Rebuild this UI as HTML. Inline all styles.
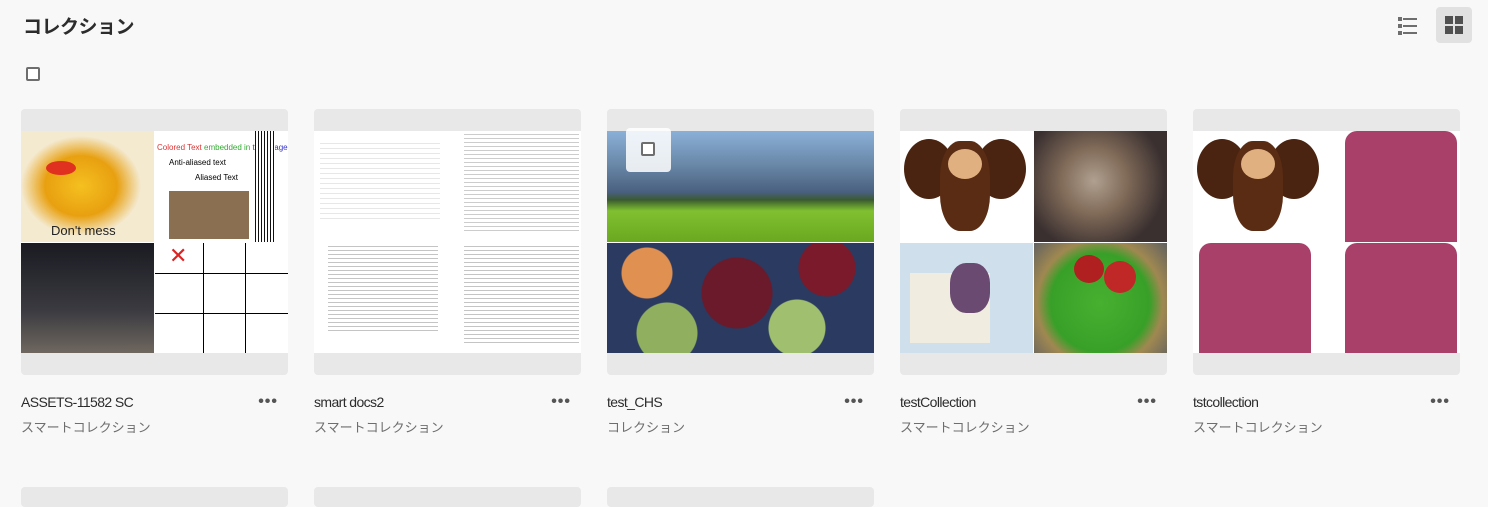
<!DOCTYPE html>
<html><head><meta charset="utf-8"><style>
*{margin:0;padding:0;box-sizing:border-box}
body{width:1488px;height:504px;background:#f8f8f8;font-family:"Liberation Sans","Noto Sans CJK JP",sans-serif;position:relative;overflow:hidden}
h1{position:absolute;left:23px;top:12px;font-size:19px;font-weight:bold;color:#2c2c2c;letter-spacing:-0.5px}
.cb{position:absolute;width:14px;height:14px;border:2px solid #6e6e6e;border-radius:2px;background:#fff}
.card{position:absolute;top:109px;width:267px}
.thumb{height:266px;background:#e8e8e8;border-radius:4px;position:relative;overflow:hidden}
.img{position:absolute;left:0;top:22px;width:267px;height:222px;background:#fff;overflow:hidden}
.q{position:absolute;width:133px;height:111px;overflow:hidden}
.tl{left:0;top:0}.tr{left:134px;top:0}.bl{left:0;top:112px}.br{left:134px;top:112px}
.t{position:absolute;top:285px;left:0;font-size:14px;color:#2c2c2c;letter-spacing:-0.6px}
.s{position:absolute;top:308px;left:0;font-size:13px;color:#6e6e6e}
.dots{position:absolute;right:10px;top:284px;font-size:16px;color:#555;letter-spacing:1px;font-weight:bold}
.r2{position:absolute;top:487px;width:267px;height:20px;background:#e8e8e8;border-radius:4px}
</style></head><body>
<h1>コレクション</h1>
<div style="position:absolute;left:1398px;top:16px;width:20px;height:20px">
<svg width="20" height="20"><g fill="#6e6e6e"><rect x="0" y="1" width="4" height="4"/><rect x="0" y="8" width="4" height="4"/><rect x="0" y="15" width="4" height="4"/><rect x="5" y="2" width="14" height="2"/><rect x="5" y="9" width="14" height="2"/><rect x="5" y="16" width="14" height="2"/></g></svg></div>
<div style="position:absolute;left:1436px;top:7px;width:36px;height:36px;background:#e1e1e1;border-radius:4px">
<svg width="36" height="36"><g fill="#505050"><rect x="9" y="9" width="8" height="8"/><rect x="19" y="9" width="8" height="8"/><rect x="9" y="19" width="8" height="8"/><rect x="19" y="19" width="8" height="8"/></g></svg></div>
<div class="cb" style="left:26px;top:67px"></div>

<div class="card" style="left:21px"><div class="thumb"><div class="img">
<div class="q tl" style="background:radial-gradient(ellipse 60px 50px at 60px 55px,#f5c020,#e8a010 60%,#f4ead0 100%)"><div style="position:absolute;left:25px;top:30px;width:30px;height:14px;background:#e03020;border-radius:50%"></div><div style="position:absolute;left:30px;top:92px;font-size:13px;color:#222">Don't mess</div></div>
<div class="q tr" style="background:#fff"><div style="font-size:8px;color:#d33;margin:12px 0 0 2px">Colored Text <span style="color:#3a3">embedded in</span> <span style="color:#33c">the image</span></div><div style="font-size:8px;margin:6px 0 0 14px">Anti-aliased text</div><div style="font-size:8px;margin:6px 0 0 40px">Aliased Text</div><div style="position:absolute;left:14px;top:60px;width:80px;height:48px;background:#8a7050"></div><div style="position:absolute;left:100px;top:0;width:20px;height:111px;background:repeating-linear-gradient(90deg,#111 0 1px,#fff 1px 3px)"></div></div>
<div class="q bl" style="background:linear-gradient(#1a1a22,#3a3a40 60%,#706860)"></div>
<div class="q br" style="background:#fff"><div style="position:absolute;left:48px;top:0;width:1px;height:111px;background:#000"></div><div style="position:absolute;left:90px;top:0;width:1px;height:111px;background:#000"></div><div style="position:absolute;left:0;top:30px;width:133px;height:1px;background:#000"></div><div style="position:absolute;left:0;top:70px;width:133px;height:1px;background:#000"></div><div style="position:absolute;left:14px;top:0;color:#d22;font-size:22px">✕</div></div>
</div></div><div class="t">ASSETS-11582 SC</div><div class="dots">•••</div><div class="s">スマートコレクション</div></div>

<div class="card" style="left:314px"><div class="thumb"><div class="img">
<div style="position:absolute;left:6px;top:8px;width:120px;height:80px;background:repeating-linear-gradient(#fff 0 4px,#ddd 4px 5px);opacity:.7"></div>
<div style="position:absolute;left:150px;top:0;width:115px;height:100px;background:repeating-linear-gradient(#fff 0 3px,#ccc 3px 4px)"></div>
<div style="position:absolute;left:14px;top:112px;width:110px;height:90px;background:repeating-linear-gradient(#fff 0 3px,#c4c4c4 3px 4px)"></div>
<div style="position:absolute;left:150px;top:112px;width:115px;height:100px;background:repeating-linear-gradient(#fff 0 3px,#c4c4c4 3px 4px)"></div>
</div></div><div class="t">smart docs2</div><div class="dots">•••</div><div class="s">スマートコレクション</div></div>

<div class="card" style="left:607px"><div class="thumb"><div class="img">
<div style="position:absolute;left:0;top:0;width:267px;height:111px;background:linear-gradient(#8ab0d8 0,#6a88a8 30%,#4a6080 55%,#3a5a30 62%,#80c030 72%,#6aa820 100%)"></div>
<div style="position:absolute;left:0;top:112px;width:267px;height:110px;background:radial-gradient(circle at 40px 30px,#e09050 0 25px,transparent 26px),radial-gradient(circle at 130px 50px,#6a1a2a 0 35px,transparent 36px),radial-gradient(circle at 60px 90px,#90b060 0 30px,transparent 31px),radial-gradient(circle at 190px 85px,#a0c070 0 28px,transparent 29px),radial-gradient(circle at 220px 25px,#7a1a2a 0 28px,transparent 29px),#2a3a60"></div>
</div><div style="position:absolute;left:19px;top:19px;width:45px;height:44px;background:rgba(255,255,255,.85);border-radius:4px"><div class="cb" style="left:15px;top:14px"></div></div></div>
<div class="t">test_CHS</div><div class="dots">•••</div><div class="s">コレクション</div></div>

<div class="card" style="left:900px"><div class="thumb"><div class="img">
<div class="q tl" style="background:#fff"><div style="position:absolute;left:4px;top:8px;width:50px;height:60px;background:#4a2410;border-radius:50%"></div><div style="position:absolute;left:76px;top:8px;width:50px;height:60px;background:#4a2410;border-radius:50%"></div><div style="position:absolute;left:40px;top:10px;width:50px;height:90px;background:#5a2c14;border-radius:40%"></div><div style="position:absolute;left:48px;top:18px;width:34px;height:30px;background:#e0b080;border-radius:50%"></div></div>
<div class="q tr" style="background:radial-gradient(circle at 60px 50px,#b0a090 0,#806a58 35%,#3a3030 75%)"></div>
<div class="q bl" style="background:#cfe0ec"><div style="position:absolute;left:10px;top:30px;width:80px;height:70px;background:#f0ece0"></div><div style="position:absolute;left:50px;top:20px;width:40px;height:50px;background:#6a4a70;border-radius:40%"></div></div>
<div class="q br" style="background:radial-gradient(circle at 66px 60px,#48b030 0,#38a028 55%,#a08850 70%,#606060 100%)"><div style="position:absolute;left:40px;top:12px;width:30px;height:28px;background:#b02020;border-radius:50%"></div><div style="position:absolute;left:70px;top:18px;width:32px;height:32px;background:#c02828;border-radius:50%"></div></div>
</div></div><div class="t">testCollection</div><div class="dots">•••</div><div class="s">スマートコレクション</div></div>

<div class="card" style="left:1193px"><div class="thumb"><div class="img">
<div class="q tl" style="background:#fff"><div style="position:absolute;left:4px;top:8px;width:50px;height:60px;background:#4a2410;border-radius:50%"></div><div style="position:absolute;left:76px;top:8px;width:50px;height:60px;background:#4a2410;border-radius:50%"></div><div style="position:absolute;left:40px;top:10px;width:50px;height:90px;background:#5a2c14;border-radius:40%"></div><div style="position:absolute;left:48px;top:18px;width:34px;height:30px;background:#e0b080;border-radius:50%"></div></div>
<div class="q tr" style="background:#fff"><div style="position:absolute;left:18px;top:0;width:112px;height:111px;background:#a8406a;border-radius:12px 12px 0 0"></div></div>
<div class="q bl" style="background:#fff"><div style="position:absolute;left:6px;top:0;width:112px;height:111px;background:#a8406a;border-radius:12px 12px 0 0"></div></div>
<div class="q br" style="background:#fff"><div style="position:absolute;left:18px;top:0;width:112px;height:111px;background:#a8406a;border-radius:12px 12px 0 0"></div></div>
</div></div><div class="t">tstcollection</div><div class="dots">•••</div><div class="s">スマートコレクション</div></div>

<div class="r2" style="left:21px"></div><div class="r2" style="left:314px"></div><div class="r2" style="left:607px"></div>
</body></html>
